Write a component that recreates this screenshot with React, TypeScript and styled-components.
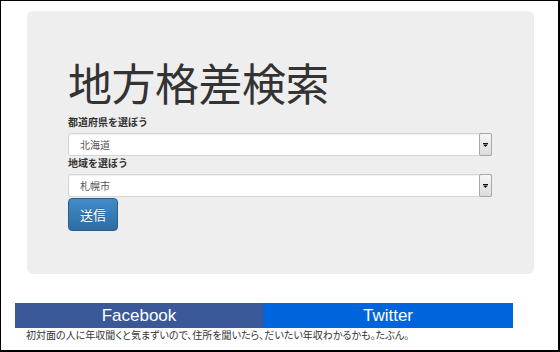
import React, { useState } from 'react';
import styled, { createGlobalStyle } from 'styled-components';

const GlobalStyle = createGlobalStyle`
  html, body {
    margin: 0;
    padding: 0;
    background: #fff;
  }
  body {
    font-family: "Noto Sans CJK JP", "Liberation Sans", sans-serif;
    color: #333;
  }
`;

const Frame = styled.div`
  width: 560px;
  height: 352px;
  box-sizing: border-box;
  border-style: solid;
  border-color: #000;
  border-width: 1px 2px 2px 1px;
  overflow: hidden;
`;

const Jumbotron = styled.div`
  margin: 10px 0 0 26px;
  width: 507px;
  height: 263px;
  box-sizing: border-box;
  padding: 47px 41px 0;
  background: #eeeeee;
  border-radius: 6px;
`;

const Title = styled.h1`
  margin: 0 0 9px;
  font-size: 44px;
  line-height: 48px;
  font-weight: 400;
  color: #333;
  letter-spacing: -0.5px;
`;

const Label = styled.label`
  display: block;
  font-size: 10px;
  line-height: 14px;
  font-weight: 700;
  color: #333;
  margin-bottom: 4px;
`;

const SelectWrap = styled.div`
  position: relative;
  width: 424px;
  height: 23px;
`;

const Select = styled.select`
  appearance: none;
  -webkit-appearance: none;
  display: block;
  width: 100%;
  height: 100%;
  box-sizing: border-box;
  margin: 0;
  padding: 0 0 0 11px;
  border: 1px solid #d4d4d4;
  border-radius: 3px 0 0 3px;
  background: #fff;
  box-shadow: inset 0 1px 1px rgba(0, 0, 0, 0.06);
  font-family: "Noto Sans CJK JP", sans-serif;
  font-size: 10px;
  color: #555;
  outline: none;
`;

const ArrowBox = styled.span`
  position: absolute;
  top: 0;
  right: 0;
  width: 13px;
  height: 100%;
  box-sizing: border-box;
  border: 1px solid #a7a7a7;
  border-radius: 2px;
  background: linear-gradient(#f7f7f7, #dcdcdc);
  display: flex;
  align-items: center;
  justify-content: center;
  pointer-events: none;
`;

const SubmitButton = styled.button`
  display: block;
  margin-top: 1px;
  padding: 8px 11px;
  font-family: "Noto Sans CJK JP", sans-serif;
  font-size: 13px;
  line-height: 15px;
  color: #fff;
  border: 1px solid #285e8e;
  border-radius: 4px;
  background: linear-gradient(#428bca, #2d6ca2);
  text-shadow: 0 -1px 0 rgba(0, 0, 0, 0.2);
  cursor: pointer;
`;

const ShareBar = styled.div`
  margin: 29px 0 0 14px;
  width: 498px;
  display: grid;
  grid-template-columns: 248px 250px;
`;

const ShareButton = styled.a<{ $bg: string }>`
  display: block;
  height: 25px;
  line-height: 25px;
  text-align: center;
  background: ${({ $bg }) => $bg};
  color: #fff;
  font-family: "Liberation Sans", Arial, sans-serif;
  font-size: 17px;
  text-decoration: none;
`;

const Caption = styled.p`
  margin: 0 0 0 25px;
  font-size: 10px;
  line-height: 13px;
  color: #333;
  font-feature-settings: "palt";
`;

const Arrow = () => (
  <svg width="5" height="4" viewBox="0 0 5 4">
    <rect x="0" y="0" width="5" height="1" fill="#111" />
    <path d="M0 1.5 H5 L2.5 4 Z" fill="#111" />
  </svg>
);

const prefectures = ['北海道', '青森県', '岩手県', '宮城県'];
const cities = ['札幌市', '函館市', '小樽市', '旭川市'];

const App: React.FC = () => {
  const [pref, setPref] = useState(prefectures[0]);
  const [city, setCity] = useState(cities[0]);

  return (
    <Frame>
      <GlobalStyle />
      <Jumbotron>
        <Title>地方格差検索</Title>
        <Label>都道府県を選ぼう</Label>
        <SelectWrap>
          <Select value={pref} onChange={(e) => setPref(e.target.value)}>
            {prefectures.map((p) => (
              <option key={p}>{p}</option>
            ))}
          </Select>
          <ArrowBox>
            <Arrow />
          </ArrowBox>
        </SelectWrap>
        <Label>地域を選ぼう</Label>
        <SelectWrap>
          <Select value={city} onChange={(e) => setCity(e.target.value)}>
            {cities.map((c) => (
              <option key={c}>{c}</option>
            ))}
          </Select>
          <ArrowBox>
            <Arrow />
          </ArrowBox>
        </SelectWrap>
        <SubmitButton>送信</SubmitButton>
      </Jumbotron>
      <ShareBar>
        <ShareButton $bg="#3b5998" href="#">Facebook</ShareButton>
        <ShareButton $bg="#0064dc" href="#">Twitter</ShareButton>
      </ShareBar>
      <Caption>
        初対面の人に年収聞くと気まずいので、住所を聞いたら、だいたい年収わかるかも。たぶん。
      </Caption>
    </Frame>
  );
};

export default App;
